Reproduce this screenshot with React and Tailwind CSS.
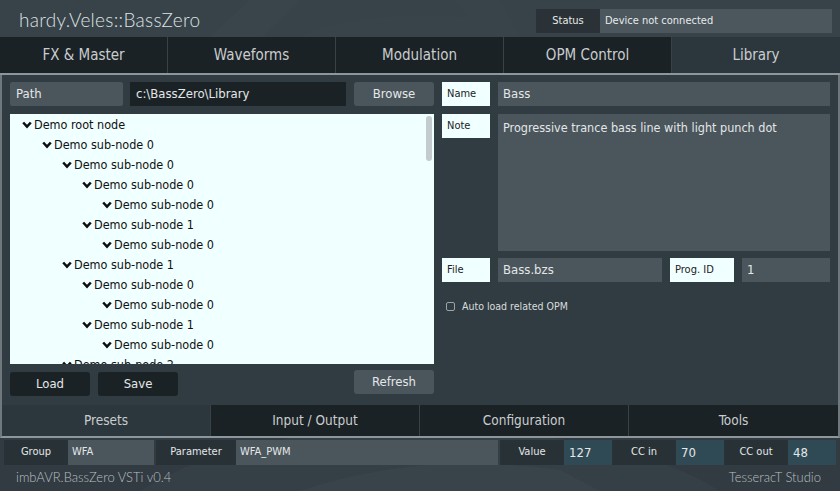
import React from "react";

const FONT = {
  fontFamily: "'DejaVu Sans Condensed', 'DejaVu Sans', sans-serif",
};

const TITLE_FONT = {
  fontFamily: "'Lato', 'Open Sans', sans-serif",
};

const topTabs = ["FX & Master", "Waveforms", "Modulation", "OPM Control", "Library"];

const bottomTabs = ["Presets", "Input / Output", "Configuration", "Tools"];

// tree rows: [level, label]
const treeRows = [
  [0, "Demo root node"],
  [1, "Demo sub-node 0"],
  [2, "Demo sub-node 0"],
  [3, "Demo sub-node 0"],
  [4, "Demo sub-node 0"],
  [3, "Demo sub-node 1"],
  [4, "Demo sub-node 0"],
  [2, "Demo sub-node 1"],
  [3, "Demo sub-node 0"],
  [4, "Demo sub-node 0"],
  [3, "Demo sub-node 1"],
  [4, "Demo sub-node 0"],
  [2, "Demo sub-node 2"],
];

const indents = ["pl-[12px]", "pl-[32px]", "pl-[52px]", "pl-[72px]", "pl-[92px]"];

const Chevron = () => (
  <svg width="10" height="8" viewBox="0 0 10 8" className="shrink-0">
    <polyline
      points="1.2,1.5 5,5.6 8.8,1.5"
      fill="none"
      stroke="#0d0d0d"
      strokeWidth="2.5"
    />
  </svg>
);

const App = () => {
  return (
    <div
      className="relative w-[840px] h-[491px] overflow-hidden bg-[#313b41] text-[#e4e7e8]"
      style={FONT}
    >
      {/* BACKGROUND SWOOSHES */}

      <svg
        className="absolute inset-0 pointer-events-none"
        width="840"
        height="491"
        viewBox="0 0 840 491"
      >
        <path d="M210 37 L250 0 L300 0 L262 37 Z" fill="#445057" opacity="0.6" />
        <path d="M300 37 Q360 10 470 18 L455 0 L500 0 L520 37 Z" fill="#404b51" opacity="0.5" />
        <path d="M140 491 Q250 420 470 430 Q640 440 720 491 Z" fill="#384349" opacity="0.7" />
        <path d="M300 491 Q420 450 560 470 L600 491 Z" fill="#3c474d" opacity="0.6" />
      </svg>

      {/* HEADER */}

      <div className="relative h-[37px] flex items-center justify-between bg-[#3a454b]/80 pl-[19px] pr-[8px]">

        <div
          className="mt-[3px] text-[19px] text-[#dfe3e4] font-light tracking-[0.3px]"
          style={TITLE_FONT}
        >
          hardy.Veles::BassZero
        </div>

        <div className="flex h-[24px] mt-[5px] text-[11px]">

          <div className="w-[64px] flex items-center justify-center bg-[#2a3237] text-[#e8eaea]">
            Status
          </div>

          <div className="w-[232px] flex items-center px-[5px] bg-[#4b565d] text-[#e8eaea]">
            Device not connected
          </div>

        </div>

      </div>

      {/* TOP TABS */}

      <div className="relative grid grid-cols-5 h-[38px] bg-[#1b2226] border-b-2 border-[#8d979b]">

        {topTabs.map((tab, i) => (
          <div
            key={tab}
            className={`flex items-center justify-center pt-[1px] text-[15px] text-[#c9cdce] ${
              i < 4 ? "border-r border-[#394247]" : ""
            } ${tab === "Library" ? "bg-[#2c373d]" : ""}`}
          >
            {tab}
          </div>
        ))}

      </div>

      {/* CONTENT */}

      <div className="relative h-[330px] flex gap-[8px] bg-[#313c42] border-x-2 border-[#6e787d] pl-[8px] pr-[8px] pt-[7px]">

        {/* LEFT */}

        <div className="w-[424px] flex flex-col">

          <div className="flex h-[24px] gap-[7px] text-[13px]">

            <div className="w-[113px] flex items-center px-[6px] bg-[#4a555c] rounded-[2px]">
              Path
            </div>

            <div className="w-[216px] flex items-center px-[6px] bg-[#1b2226]">
              c:\BassZero\Library
            </div>

            <div className="ml-[1px] w-[80px] flex items-center justify-center bg-[#4a555c] rounded-[3px]">
              Browse
            </div>

          </div>

          <div className="relative mt-[8px] h-[250px] bg-[#f0ffff] overflow-hidden text-[12.5px] text-[#111] pt-[1px]">

            {treeRows.map(([level, label], i) => (
              <div
                key={i}
                className={`h-[20px] flex items-center gap-[2px] ${indents[level]}`}
              >
                <Chevron />
                <span>{label}</span>
              </div>
            ))}

            <div className="absolute right-[2px] top-[2px] w-[6px] h-[45px] rounded-full bg-[#c3cbce]" />

          </div>

          <div className="mt-[6px] flex items-start text-[13px]">

            <div className="mt-[2px] w-[80px] h-[24px] flex items-center justify-center bg-[#1b2226] rounded-[3px]">
              Load
            </div>

            <div className="mt-[2px] ml-[8px] w-[80px] h-[24px] flex items-center justify-center bg-[#1b2226] rounded-[3px]">
              Save
            </div>

            <div className="ml-auto w-[80px] h-[24px] flex items-center justify-center bg-[#4a555c] rounded-[3px]">
              Refresh
            </div>

          </div>

        </div>

        {/* RIGHT */}

        <div className="w-[388px] flex flex-col">

          <div className="flex h-[24px] gap-[8px]">

            <div className="w-[48px] flex items-center px-[5px] bg-[#f0ffff] text-[11px] text-[#222]">
              Name
            </div>

            <div className="flex-1 flex items-center px-[5px] bg-[#4a555c] text-[13px]">
              Bass
            </div>

          </div>

          <div className="flex h-[137px] gap-[8px] mt-[8px]">

            <div className="w-[48px] h-[24px] flex items-center px-[5px] bg-[#f0ffff] text-[11px] text-[#222]">
              Note
            </div>

            <div className="flex-1 px-[5px] pt-[5px] bg-[#4a555c] text-[12.5px]">
              Progressive trance bass line with light punch dot
            </div>

          </div>

          <div className="flex h-[24px] gap-[8px] mt-[7px]">

            <div className="w-[48px] flex items-center px-[5px] bg-[#f0ffff] text-[11px] text-[#222]">
              File
            </div>

            <div className="w-[164px] flex items-center px-[5px] bg-[#4a555c] text-[13px]">
              Bass.bzs
            </div>

            <div className="w-[64px] flex items-center px-[5px] bg-[#f0ffff] text-[11px] text-[#222]">
              Prog. ID
            </div>

            <div className="flex-1 flex items-center px-[5px] bg-[#4a555c] text-[13px]">
              1
            </div>

          </div>

          <div className="mt-[17px] flex items-center gap-[7px] pl-[4px] text-[10.5px] text-[#d8dcdd]">

            <div className="w-[9px] h-[9px] border border-[#9aa3a7] rounded-[2px]" />

            Auto load related OPM

          </div>

        </div>

      </div>

      {/* BOTTOM TABS */}

      <div className="relative grid grid-cols-4 h-[33px] bg-[#1b2226] border-b-2 border-[#8d979b] border-x-2 border-x-[#6e787d]">

        {bottomTabs.map((tab, i) => (
          <div
            key={tab}
            className={`flex items-center justify-center text-[13.5px] text-[#c9cdce] ${
              i < 3 ? "border-r border-[#394247]" : ""
            } ${tab === "Presets" ? "bg-[#2c373d]" : ""}`}
          >
            {tab}
          </div>
        ))}

      </div>

      {/* STATUS BAR */}

      <div className="relative mt-[2px] flex h-[25px] pl-[4px] text-[11px]">

        <div className="w-[64px] flex items-center justify-center bg-[#283136]">
          Group
        </div>

        <div className="w-[86px] flex items-center px-[4px] bg-[#4a555c]">
          WFA
        </div>

        <div className="ml-[2px] w-[80px] flex items-center justify-center bg-[#283136]">
          Parameter
        </div>

        <div className="w-[262px] flex items-center px-[4px] bg-[#4a555c]">
          WFA_PWM
        </div>

        <div className="ml-[2px] w-[64px] flex items-center justify-center bg-[#283136]">
          Value
        </div>

        <div className="w-[48px] flex items-center px-[5px] bg-[#2f4a55] text-[13px]">
          127
        </div>

        <div className="w-[64px] flex items-center justify-center bg-[#283136]">
          CC in
        </div>

        <div className="w-[48px] flex items-center px-[5px] bg-[#2f4a55] text-[13px]">
          70
        </div>

        <div className="w-[64px] flex items-center justify-center bg-[#283136]">
          CC out
        </div>

        <div className="w-[48px] flex items-center px-[5px] bg-[#2f4a55] text-[13px]">
          48
        </div>

      </div>

      {/* FOOTER */}

      <div
        className="relative h-[26px] flex items-center justify-between pl-[16px] pr-[19px] text-[13px] text-[#b9bfc2] font-light"
        style={TITLE_FONT}
      >

        <span>imbAVR.BassZero VSTi v0.4</span>

        <span>TesseracT Studio</span>

      </div>

    </div>
  );
};

export default App;
